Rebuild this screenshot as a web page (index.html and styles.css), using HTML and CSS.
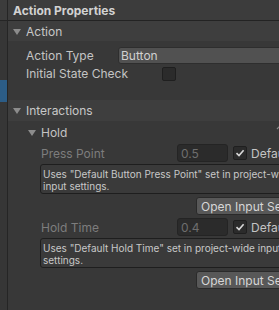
FILE: index.html
```html
<!DOCTYPE html>
<html>
<head>
<meta charset="utf-8">
<link rel="stylesheet" href="styles.css">
</head>
<body>
<div class="root">
  <div class="strip">
    <div class="strip-top"></div>
    <div class="strip-gap"></div>
    <div class="strip-sel"></div>
  </div>
  <div class="panel">
    <div class="header">Action Properties</div>
    <div class="fold fold-action">
      <span class="tri"></span><span>Action</span>
    </div>
    <div class="row row-type">
      <span class="label w92">Action Type</span>
      <div class="dropdown">Button</div>
    </div>
    <div class="row row-check">
      <span class="label w136">Initial State Check</span>
      <span class="checkbox"></span>
    </div>
    <div class="fold fold-inter">
      <span class="tri"></span><span>Interactions</span>
    </div>
    <div class="row row-hold">
      <span class="tri"></span><span class="label">Hold</span>
      <svg class="corner" width="8" height="8" viewBox="0 0 8 8"><path d="M1 6 L5 2" stroke="#8a8a8a" stroke-width="1.2" fill="none"/></svg>
    </div>

    <div class="param">
      <div class="row prow">
        <span class="label dim w136">Press Point</span>
        <div class="field">0.5</div>
        <span class="checkbox checked"><svg width="10" height="10" viewBox="0 0 10 10"><path d="M1.5 5.2 L4 7.6 L8.6 2.2" stroke="#d8d8d8" stroke-width="1.6" fill="none"/></svg></span>
        <span class="deflabel">Default</span>
      </div>
      <div class="help">Uses "Default Button Press Point" set in project-wide input settings.</div>
      <div class="btnrow"><div class="btn">Open Input Settings</div></div>
    </div>

    <div class="param">
      <div class="row prow">
        <span class="label dim w136">Hold Time</span>
        <div class="field">0.4</div>
        <span class="checkbox checked"><svg width="10" height="10" viewBox="0 0 10 10"><path d="M1.5 5.2 L4 7.6 L8.6 2.2" stroke="#d8d8d8" stroke-width="1.6" fill="none"/></svg></span>
        <span class="deflabel">Default</span>
      </div>
      <div class="help">Uses "Default Hold Time" set in project-wide input settings.</div>
      <div class="btnrow"><div class="btn">Open Input Settings</div></div>
    </div>
  </div>
</div>
</body>
</html>
```

FILE: styles.css
```css
html, body {
  margin: 0;
  padding: 0;
  background: #383838;
  overflow: hidden;
}
body {
  width: 279px;
  height: 310px;
  font-family: Inter, "Noto Sans", sans-serif;
  font-size: 12px;
  color: #c4c4c4;
}
.root {
  display: flex;
  width: 360px;
  height: 310px;
}
.strip {
  width: 7px;
  flex: none;
  border-right: 1px solid #252525;
  display: flex;
  flex-direction: column;
  background: #363636;
}
.strip-top {
  height: 20px;
  background: #3c3c3c;
  border-bottom: 1px solid #252525;
}
.strip-gap {
  height: 59px;
}
.strip-sel {
  height: 22px;
  background: #2c5d87;
}
.panel {
  flex: 1;
  display: flex;
  flex-direction: column;
}
.header {
  height: 20px;
  border-bottom: 1px solid #232323;
  background: #3c3c3c;
  padding-left: 5px;
  display: flex;
  align-items: center;
  font-weight: 700;
  font-size: 12px;
  color: #d2d2d2;
}
.fold {
  height: 20px;
  display: flex;
  align-items: center;
  padding-left: 5px;
  background: #3e3e3e;
  color: #c8c8c8;
}
.tri {
  width: 0;
  height: 0;
  border-left: 4px solid transparent;
  border-right: 4px solid transparent;
  border-top: 6px solid #8c8c8c;
  margin-right: 5px;
  margin-top: 1px;
}
.row {
  display: flex;
  align-items: center;
  height: 18px;
  padding-left: 18px;
}
.row-type { margin-top: 5px; }
.fold-inter { margin-top: 18px; height: 21px; }
.label { white-space: nowrap; }
.w92 { width: 92px; flex: none; }
.w136 { width: 136px; flex: none; }
.dim { color: #7d7d7d; }
.dropdown {
  flex: 1;
  height: 15px;
  background: #515151;
  border: 1px solid #2e2e2e;
  border-radius: 3px;
  padding-left: 2px;
  display: flex;
  align-items: center;
  color: #d0d0d0;
}
.checkbox {
  width: 12px;
  height: 12px;
  background: #2b2b2b;
  border: 1px solid #1f1f1f;
  border-radius: 2px;
  display: flex;
  align-items: center;
  justify-content: center;
  flex: none;
}
.row-check .checkbox { margin-top: 1px; }
.row-hold {
  padding-left: 20px;
  margin-top: 2px;
  position: relative;
}
.corner {
  position: absolute;
  right: 76px;
  top: 0px;
}
.param {
  display: flex;
  flex-direction: column;
  padding-left: 32px;
}
.prow {
  padding-left: 1px;
  margin-top: 3px;
}
.field {
  width: 46px;
  height: 16px;
  background: #2b2b2b;
  border: 1px solid #242424;
  border-radius: 3px;
  color: #6e6e6e;
  padding-left: 3px;
  box-sizing: content-box;
  display: flex;
  align-items: center;
  flex: none;
  font-size: 12px;
}
.prow .checkbox { margin-left: 5px; }
.deflabel {
  margin-left: 4px;
  color: #c4c4c4;
}
.help {
  margin-top: 2px;
  width: 262px;
  height: 30px;
  border: 1px solid #1e1e1e;
  border-radius: 3px;
  background: #3a3a3a;
  font-size: 10px;
  line-height: 12px;
  padding: 3px 2px 0 2px;
  box-sizing: border-box;
  color: #c8c8c8;
}
.btnrow {
  display: flex;
  padding-left: 156px;
  margin-top: 3px;
}
.btn {
  height: 18px;
  background: #585858;
  border: 1px solid #2a2a2a;
  border-radius: 3px;
  box-sizing: border-box;
  padding-left: 4px;
  width: 140px;
  display: flex;
  align-items: center;
  white-space: nowrap;
  color: #d6d6d6;
}
```
